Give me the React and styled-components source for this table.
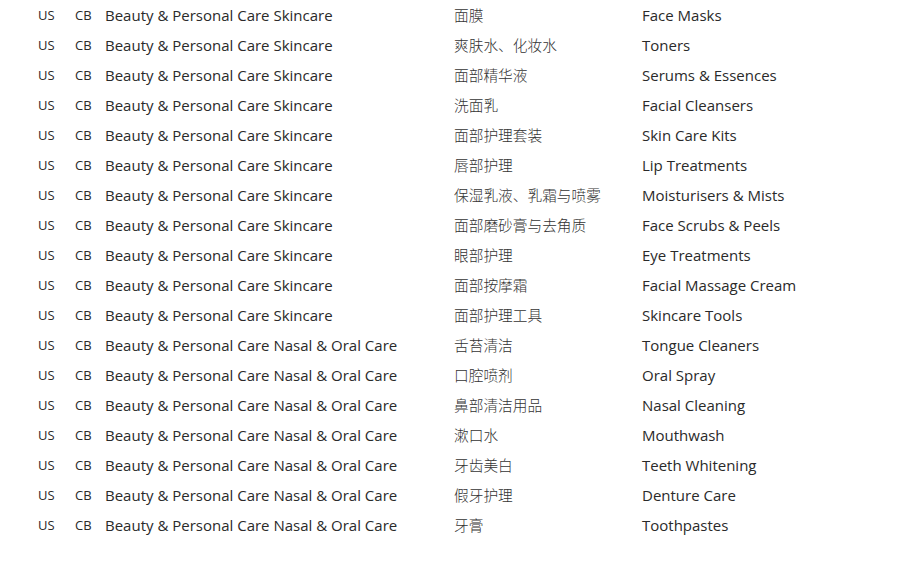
import React from "react";
import styled, { createGlobalStyle } from "styled-components";

const GlobalStyle = createGlobalStyle`
  html, body {
    margin: 0;
    padding: 0;
    background: #fff;
  }
  body {
    font-family: "Open Sans", "Noto Sans CJK SC", sans-serif;
    color: #2a2a2a;
  }
`;

const rows = [
  ["Skincare", "面膜", "Face Masks"],
  ["Skincare", "爽肤水、化妆水", "Toners"],
  ["Skincare", "面部精华液", "Serums & Essences"],
  ["Skincare", "洗面乳", "Facial Cleansers"],
  ["Skincare", "面部护理套装", "Skin Care Kits"],
  ["Skincare", "唇部护理", "Lip Treatments"],
  ["Skincare", "保湿乳液、乳霜与喷雾", "Moisturisers & Mists"],
  ["Skincare", "面部磨砂膏与去角质", "Face Scrubs & Peels"],
  ["Skincare", "眼部护理", "Eye Treatments"],
  ["Skincare", "面部按摩霜", "Facial Massage Cream"],
  ["Skincare", "面部护理工具", "Skincare Tools"],
  ["Nasal & Oral Care", "舌苔清洁", "Tongue Cleaners"],
  ["Nasal & Oral Care", "口腔喷剂", "Oral Spray"],
  ["Nasal & Oral Care", "鼻部清洁用品", "Nasal Cleaning"],
  ["Nasal & Oral Care", "漱口水", "Mouthwash"],
  ["Nasal & Oral Care", "牙齿美白", "Teeth Whitening"],
  ["Nasal & Oral Care", "假牙护理", "Denture Care"],
  ["Nasal & Oral Care", "牙膏", "Toothpastes"],
];

const Table = styled.div`
  display: flex;
  flex-direction: column;
  padding-left: 38px;
`;

const Row = styled.div`
  display: grid;
  grid-template-columns: 37px 30px 349px 188px 1fr;
  height: 30px;
  align-items: center;
`;

const Cell = styled.span`
  font-size: ${(p) => (p.$small ? "13px" : "15px")};
  white-space: nowrap;
  color: #2a2a2a;
`;

const CnCell = styled(Cell)`
  font-family: "Noto Sans CJK SC", sans-serif;
  font-size: 14.7px;
  font-weight: 300;
  line-height: 1;
  color: #333;
`;

export default function App() {
  return (
    <>
      <GlobalStyle />
      <Table>
        {rows.map(([sub, cn, en], i) => (
          <Row key={i}>
            <Cell $small>US</Cell>
            <Cell $small>CB</Cell>
            <Cell>Beauty &amp; Personal Care {sub}</Cell>
            <CnCell>{cn}</CnCell>
            <Cell>{en}</Cell>
          </Row>
        ))}
      </Table>
    </>
  );
}
